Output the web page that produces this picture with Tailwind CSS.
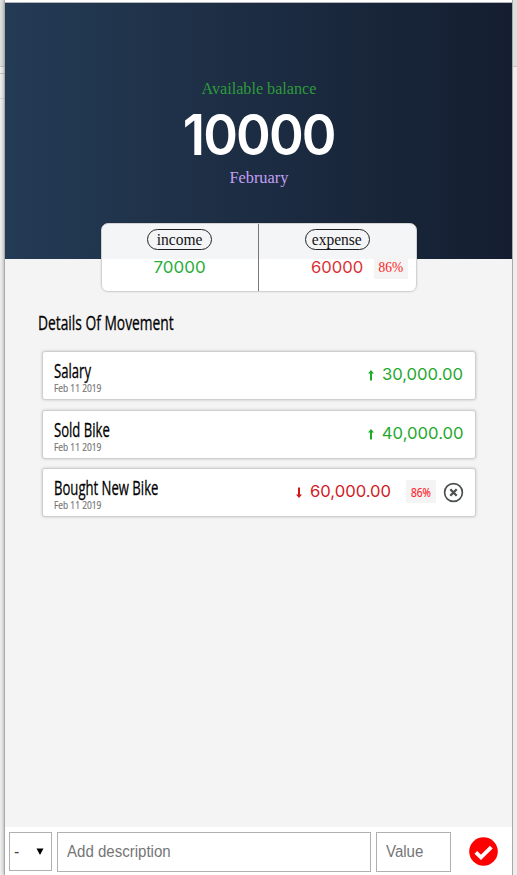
<!DOCTYPE html>
<html lang="en">
<head>
<meta charset="utf-8">
<title>Budget</title>
<script src="https://cdn.jsdelivr.net/npm/@tailwindcss/browser@4"></script>
</head>
<body class="w-[517px] h-[875px] overflow-hidden flex bg-white font-['Liberation_Serif',serif]">
  <div class="w-[4px] shrink-0 flex flex-col bg-[#f0f0f0]">
    <div class="h-[66px] bg-[#e1e3e2]"></div>
    <div class="h-[8px] border-y border-[#c8c8c8] bg-[#f2f2f2]"></div>
    <div class="h-[25px] border-b border-[#dadada]"></div>
  </div>
  <main class="w-[509px] shrink-0 flex flex-col border-x border-[#aaaaaa] bg-[#f4f4f4] shadow-[0_0_4px_rgba(0,0,0,0.35)]">
    <div class="h-[3px] shrink-0 bg-white border-b border-[#b5b4b8]"></div>
    <header class="h-[256px] shrink-0 flex flex-col items-center bg-linear-to-r from-[#243b55] to-[#141e30]">
      <h2 class="mt-[76px] h-[20px] leading-[20px] text-[16px] text-[#2e9b3c] whitespace-nowrap"><span class="inline-block scale-x-[1.01]">Available balance</span></h2>
      <h1 class="mt-[8px] h-[56px] leading-[57px] text-[56px] font-semibold text-white font-['Inter',sans-serif] whitespace-nowrap tracking-[-2px]"><span class="inline-block scale-x-[0.94]">10000</span></h1>
      <h3 class="mt-[5px] h-[20px] leading-[20px] text-[16px] text-[#c3a0f5]"><span class="inline-block scale-x-[1.02]">February</span></h3>
      <section class="mt-[35px] w-[316px] h-[69px] shrink-0 flex rounded-[7px] border border-[#d2d2d2] bg-linear-to-b from-[#f4f5f7] from-[35px] to-white to-[35px] shadow-[0_0_2px_rgba(0,0,0,0.15)]">
        <div class="w-[157px] border-r border-[#777777] flex flex-col items-center">
          <div class="mt-[5px] w-[65px] h-[21px] rounded-full border border-[#222222] text-center text-[16px] leading-[20px] text-[#111111]"><span class="inline-block scale-x-[0.97]">income</span></div>
          <div class="mt-[7px] h-[20px] leading-[20px] text-[16px] text-[#28ae38] font-['Inter',sans-serif]"><span class="inline-block scale-x-[1.06]">70000</span></div>
        </div>
        <div class="w-[157px] flex flex-col items-center">
          <div class="mt-[5px] w-[65px] h-[21px] rounded-full border border-[#222222] text-center text-[16px] leading-[20px] text-[#111111]"><span class="inline-block scale-x-[0.97]">expense</span></div>
          <div class="mt-[6px] w-full h-[23px] flex justify-end pr-[8px]">
            <span class="mt-[1px] leading-[20px] text-[16px] text-[#dc3035] font-['Inter',sans-serif] origin-right scale-x-[1.04]">60000</span>
            <span class="ml-[10px] w-[34px] h-[23px] leading-[24px] text-center text-[14px] text-[#ff1c1c] bg-[#f4f4f4]"><span class="inline-block scale-x-[0.96]">86%</span></span>
          </div>
        </div>
      </section>
    </header>
    <section class="grow pt-[51px] pl-[33px] font-['Open_Sans',sans-serif]">
      <h4 class="h-[26px] leading-[26px] text-[20px] text-black whitespace-nowrap [-webkit-text-stroke:0.3px]"><span class="inline-block origin-left scale-x-[0.69]">Details Of Movement</span></h4>
      <ul class="mt-[15px] ml-[4px] w-[434px] flex flex-col gap-[9.5px]">
        <li class="h-[49px] flex rounded-[3px] border border-[#cfcfcf] bg-white shadow-[0_0_3px_rgba(0,0,0,0.2)] pl-[11px] pr-[12px]">
          <div class="w-[150px] pt-[7px] whitespace-nowrap">
            <div class="h-[24px] leading-[24px] text-[20px] text-black [-webkit-text-stroke:0.3px]"><span class="inline-block origin-left scale-x-[0.655]">Salary</span></div>
            <div class="h-[12px] leading-[11px] text-[10px] text-[#757575]"><span class="inline-block origin-left scale-x-[0.84] [-webkit-text-stroke:0.2px]">Feb 11 2019</span></div>
          </div>
          <div class="grow flex justify-end pt-[12px] h-[36px]">
            <svg class="mt-[6px] mr-[7px] w-[8px] h-[11px] shrink-0" viewBox="0 0 8 11"><path d="M4 0 7 3.5H5V10.5H3V3.5H1Z" fill="#20aa28"/></svg>
            <span class="w-[81px] flex justify-end leading-[20px] text-[16px] text-[#24a82e] font-['Inter',sans-serif]"><span class="origin-right scale-x-[1.04]">30,000.00</span></span>
          </div>
        </li>
        <li class="h-[49px] flex rounded-[3px] border border-[#cfcfcf] bg-white shadow-[0_0_3px_rgba(0,0,0,0.2)] pl-[11px] pr-[12px]">
          <div class="w-[150px] pt-[7px] whitespace-nowrap">
            <div class="h-[24px] leading-[24px] text-[20px] text-black [-webkit-text-stroke:0.3px]"><span class="inline-block origin-left scale-x-[0.655]">Sold Bike</span></div>
            <div class="h-[12px] leading-[11px] text-[10px] text-[#757575]"><span class="inline-block origin-left scale-x-[0.84] [-webkit-text-stroke:0.2px]">Feb 11 2019</span></div>
          </div>
          <div class="grow flex justify-end pt-[12px] h-[36px]">
            <svg class="mt-[6px] mr-[7px] w-[8px] h-[11px] shrink-0" viewBox="0 0 8 11"><path d="M4 0 7 3.5H5V10.5H3V3.5H1Z" fill="#20aa28"/></svg>
            <span class="w-[81px] flex justify-end leading-[20px] text-[16px] text-[#24a82e] font-['Inter',sans-serif]"><span class="origin-right scale-x-[1.04]">40,000.00</span></span>
          </div>
        </li>
        <li class="h-[49px] flex rounded-[3px] border border-[#cfcfcf] bg-white shadow-[0_0_3px_rgba(0,0,0,0.2)] pl-[11px] pr-[11px]">
          <div class="w-[150px] pt-[7px] whitespace-nowrap">
            <div class="h-[24px] leading-[24px] text-[20px] text-black [-webkit-text-stroke:0.3px]"><span class="inline-block origin-left scale-x-[0.655]">Bought New Bike</span></div>
            <div class="h-[12px] leading-[11px] text-[10px] text-[#757575]"><span class="inline-block origin-left scale-x-[0.84] [-webkit-text-stroke:0.2px]">Feb 11 2019</span></div>
          </div>
          <div class="grow flex justify-end pt-[12px] h-[36px]">
            <svg class="mt-[6px] mr-[7px] w-[8px] h-[11px] shrink-0" viewBox="0 0 8 11"><path d="M4 11 7 7.5H5V0.5H3V7.5H1Z" fill="#d01818"/></svg>
            <span class="w-[81px] flex justify-end leading-[20px] text-[16px] text-[#d02026] font-['Inter',sans-serif]"><span class="origin-right scale-x-[1.04]">60,000.00</span></span>
            <span class="ml-[15px] -mt-[1px] w-[30px] h-[23px] shrink-0 bg-[#f4f4f4] text-[12px] leading-[25px] text-[#ff1c2c] flex justify-center"><span class="scale-x-[0.84] [-webkit-text-stroke:0.2px]">86%</span></span>
            <svg class="ml-[7px] mt-[1px] w-[21px] h-[21px] shrink-0" viewBox="0 0 21 21" fill="none" stroke="#4c5050"><circle cx="10.5" cy="10.5" r="8.9" stroke-width="1.7"/><path d="M7.3 7.3 13.7 13.7M13.7 7.3 7.3 13.7" stroke-width="2.3"/></svg>
          </div>
        </li>
      </ul>
    </section>
    <footer class="h-[48px] shrink-0 bg-white flex pl-[4px] pt-[5px] font-['Liberation_Sans',sans-serif] text-[16px] text-[#757575]">
      <div class="w-[43px] h-[39px] border border-[#b0b0b0] flex items-center justify-between pl-[4px] pr-[7px] text-[#444444]"><span>-</span><svg class="w-[8px] h-[7px]" viewBox="0 0 8 7"><path d="M0.5 0.5h7L4 7Z" fill="#000"/></svg></div>
      <div class="ml-[5px] w-[314px] h-[40px] border border-[#b0b0b0] leading-[37px] pl-[9px]"><span class="inline-block origin-left scale-x-[0.94]">Add description</span></div>
      <div class="ml-[5px] w-[75px] h-[40px] border border-[#b0b0b0] leading-[37px] pl-[9px]"><span class="inline-block origin-left scale-x-[0.94]">Value</span></div>
      <svg class="ml-[18px] mt-[5px] w-[29px] h-[29px]" viewBox="0 0 29 29"><circle cx="14.5" cy="14.5" r="14.3" fill="#ff0000"/><path d="M6.8 15.3 12 20.4 22.3 10.1" fill="none" stroke="#fff" stroke-width="3.8"/></svg>
    </footer>
  </main>
  <div class="w-[4px] shrink-0 bg-[#eeeeee]"><div class="h-[67px] border-b border-[#c8c8c8] bg-[#dcdedd]"></div></div>
</body>
</html>
